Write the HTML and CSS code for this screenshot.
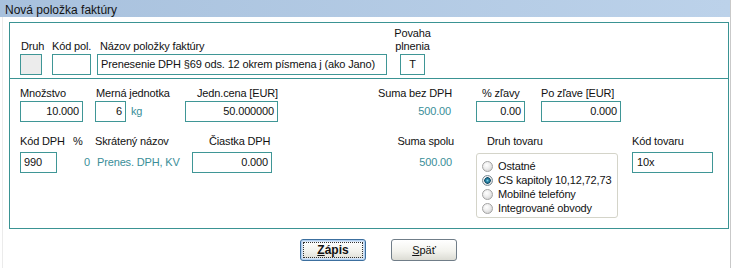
FILE: index.html
```html
<!DOCTYPE html>
<html lang="sk">
<head>
<meta charset="utf-8">
<title>Nová položka faktúry</title>
<link rel="stylesheet" href="styles.css">
</head>
<body>
<div class="window">
  <div class="titlebar">Nová položka faktúry</div>
  <div class="client">
    <section class="grp grp-head">
      <div class="fld f-druh"><span class="lbl">Druh</span><div class="box box-off"></div></div>
      <div class="fld f-kod"><span class="lbl">Kód pol.</span><div class="box"></div></div>
      <div class="fld f-nazov"><span class="lbl">Názov položky faktúry</span><div class="box">Prenesenie DPH §69 ods. 12 okrem písmena j (ako Jano)</div></div>
      <div class="fld f-pov"><span class="lbl">Povaha<br>plnenia</span><div class="box ctr">T</div></div>
    </section>
    <section class="grp grp-body">
      <div class="row row-a">
        <div class="fld c-mnoz"><span class="lbl">Množstvo</span><div class="box num">10.000</div></div>
        <div class="fld c-mj"><span class="lbl">Merná jednotka</span><div class="ctl"><div class="box num mj-box">6</div><span class="val unit">kg</span></div></div>
        <div class="fld c-jc"><span class="lbl">Jedn.cena [EUR]</span><div class="box num">50.000000</div></div>
        <div class="fld c-sbd rt"><span class="lbl">Suma bez DPH</span><span class="val">500.00</span></div>
        <div class="fld c-zl"><span class="lbl">% zľavy</span><div class="box num">0.00</div></div>
        <div class="fld c-pz"><span class="lbl">Po zľave [EUR]</span><div class="box num">0.000</div></div>
      </div>
      <div class="row row-b">
        <div class="fld c-kdph"><span class="lbl">Kód DPH</span><div class="box">990</div></div>
        <div class="fld c-pct"><span class="lbl">%</span><span class="val num">0</span></div>
        <div class="fld c-skr"><span class="lbl">Skrátený názov</span><span class="val">Prenes. DPH, KV</span></div>
        <div class="fld c-ciast"><span class="lbl">Čiastka DPH</span><div class="box num">0.000</div></div>
        <div class="fld c-ss rt"><span class="lbl">Suma spolu</span><span class="val">500.00</span></div>
        <div class="fld c-dt"><span class="lbl">Druh tovaru</span>
          <div class="radios">
            <div class="radio"><span class="dot"></span>Ostatné</div>
            <div class="radio"><span class="dot on"></span>CS kapitoly 10,12,72,73</div>
            <div class="radio"><span class="dot"></span>Mobilné telefóny</div>
            <div class="radio"><span class="dot"></span>Integrované obvody</div>
          </div>
        </div>
        <div class="fld c-kt"><span class="lbl">Kód tovaru</span><div class="box kt-box">10x</div></div>
      </div>
    </section>
    <div class="buttons">
      <button class="btn btn-default" type="button"><span class="focus"><u>Z</u>ápis</span></button>
      <button class="btn" type="button"><u>S</u>päť</button>
    </div>
  </div>
</div>
</body>
</html>
```
FILE: styles.css
```css
* { box-sizing: border-box; }
body {
  margin: 0;
  background: #fff;
  font-family: "Liberation Sans", Arial, sans-serif;
  font-size: 11px;
  letter-spacing: -0.15px;
  color: #111;
}
.window {
  width: 731px;
  height: 268px;
  border-right: 1px solid #c9c9c9;
}
.titlebar {
  height: 17px;
  padding: 4px 0 0 5px;
  font-size: 12px;
  line-height: 13px;
  letter-spacing: 0;
  color: #141414;
  background: linear-gradient(to right, #a8c1dd, #bcd2ea);
}
.client {
  height: 251px;
  margin-left: 2px;
  border-left: 1px solid #ebebeb;
  padding: 5px 0 0 6px;
}
.grp {
  width: 720px;
  border: 1px solid #3a9393;
}
.grp-head {
  height: 57px;
  display: flex;
  align-items: flex-end;
  padding: 0 0 3px 10px;
}
.grp-body {
  height: 151px;
  margin-top: -1px;
  padding-top: 8px;
}
.row { display: flex; }
.row-b { margin-top: 13px; }

.fld { display: flex; flex-direction: column; flex: none; }
.lbl {
  display: block;
  line-height: 13px;
  margin-bottom: 1px;
  white-space: nowrap;
}
.row-b .lbl { margin-bottom: 4px; }
.box {
  height: 21px;
  border: 1px solid #3f9696;
  line-height: 19px;
  padding: 0 3px;
  white-space: nowrap;
  overflow: hidden;
  background: #fff;
}
.box-off { background: #ececec; }
.num { text-align: right; }
.ctr { text-align: center; padding: 0; }
.val {
  display: block;
  line-height: 21px;
  color: #3a8e98;
  white-space: nowrap;
}
.rt { text-align: right; }

/* header group */
.f-druh { width: 22px; }
.f-druh .lbl { padding-left: 1px; }
.f-kod { width: 39px; margin-left: 10px; }
.f-nazov { width: 290px; margin-left: 6px; }
.f-nazov .lbl { padding-left: 3px; }
.f-pov { width: 25px; margin-left: 13px; align-items: center; text-align: center; }
.f-pov .box { width: 25px; }

/* row A */
.c-mnoz { width: 63px; margin-left: 10px; }
.c-mj { width: 90px; margin-left: 12px; }
.c-mj .lbl { padding-left: 1px; }
.ctl { display: flex; }
.mj-box { width: 31px; }
.unit { margin-left: 5px; }
.c-jc { width: 93px; }
.c-jc .lbl { padding-left: 12px; }
.c-sbd { width: 83px; margin-left: 92px; }
.c-sbd .lbl { padding-right: 1px; }
.c-sbd .val { padding-right: 2px; }
.c-zl { width: 49px; margin-left: 23px; }
.c-zl .lbl { padding-left: 6px; }
.c-pz { width: 80px; margin-left: 16px; }

/* row B */
.c-kdph { width: 37px; margin-left: 10px; }
.c-pct { width: 17px; margin-left: 16px; }
.c-skr { width: 97px; margin-left: 5px; }
.c-skr .val { padding-left: 2px; }
.c-ciast { width: 80px; }
.c-ciast .lbl { padding-left: 17px; }
.c-ss { width: 84px; margin-left: 98px; }
.c-ss .val { padding-right: 2px; }
.c-dt { width: 142px; margin-left: 22px; }
.c-dt .lbl { padding-left: 11px; }
.c-kt { width: 81px; margin-left: 14px; }
.kt-box { padding-left: 4px; }

.radios {
  width: 142px;
  height: 65px;
  margin-top: 1px;
  border: 1px solid #d4d4c9;
  border-radius: 3px;
  padding: 5px 0 0 5px;
}
.radio {
  display: flex;
  align-items: center;
  height: 14px;
  line-height: 14px;
  white-space: nowrap;
}
.dot {
  flex: none;
  width: 11px;
  height: 11px;
  margin-right: 5px;
  border-radius: 50%;
  border: 1px solid #a3a3a3;
  background: radial-gradient(circle at 40% 35%, #ffffff 0, #ececec 45%, #c6c6c6 100%);
}
.dot.on {
  border-color: #7c8c96;
  background:
    radial-gradient(circle at 50% 50%, #7fd0e6 0, #2a86a6 1.5px, #14506c 3px, rgba(20,80,108,0) 3.5px),
    radial-gradient(circle at 40% 35%, #ffffff 0, #ececec 45%, #c6c6c6 100%);
}

/* buttons */
.buttons {
  display: flex;
  margin-top: 10px;
  padding-left: 291px;
}
.btn {
  width: 66px;
  height: 22px;
  padding: 0;
  border: 1px solid #707d88;
  border-radius: 3px;
  background: linear-gradient(#ffffff, #f3f3ee 55%, #dcdcd4);
  font-family: "Liberation Sans", Arial, sans-serif;
  font-size: 11px;
  color: #111;
  line-height: 18px;
}
.btn + .btn { margin-left: 25px; }
.btn-default {
  border-color: #3c6f9f;
  box-shadow: inset 0 0 0 1px #b3d0f0, inset 0 0 0 2px #d6e5f6;
  padding: 2px;
  font-weight: bold;
  font-size: 12px;
}
.focus {
  display: block;
  height: 100%;
  border: 1px dotted #333;
  line-height: 14px;
}
```
